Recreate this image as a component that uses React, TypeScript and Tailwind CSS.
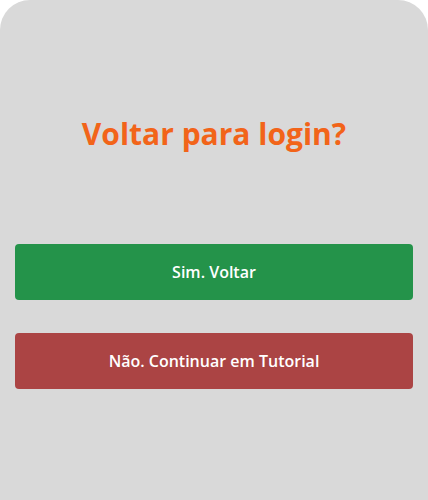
export default function App() {
  return (
    <div className="h-[500px] w-[428px] bg-white font-['Open_Sans',sans-serif]">
      <div className="flex h-full flex-col rounded-t-[30px] bg-[#d9d9d9] px-[15px]">
        <h1 className="mt-[112px] text-center text-[30px] font-bold leading-[44px] text-[#f26419]">
          Voltar para login?
        </h1>
        <div className="mt-[88px] flex flex-col gap-[33px]">
          <button className="h-[56px] w-full rounded-[4px] bg-[#24934a] text-[16px] font-semibold text-white">
            Sim. Voltar
          </button>
          <button className="h-[56px] w-full rounded-[4px] bg-[#ab4444] text-[16px] font-semibold text-white">
            Não. Continuar em Tutorial
          </button>
        </div>
      </div>
    </div>
  );
}
